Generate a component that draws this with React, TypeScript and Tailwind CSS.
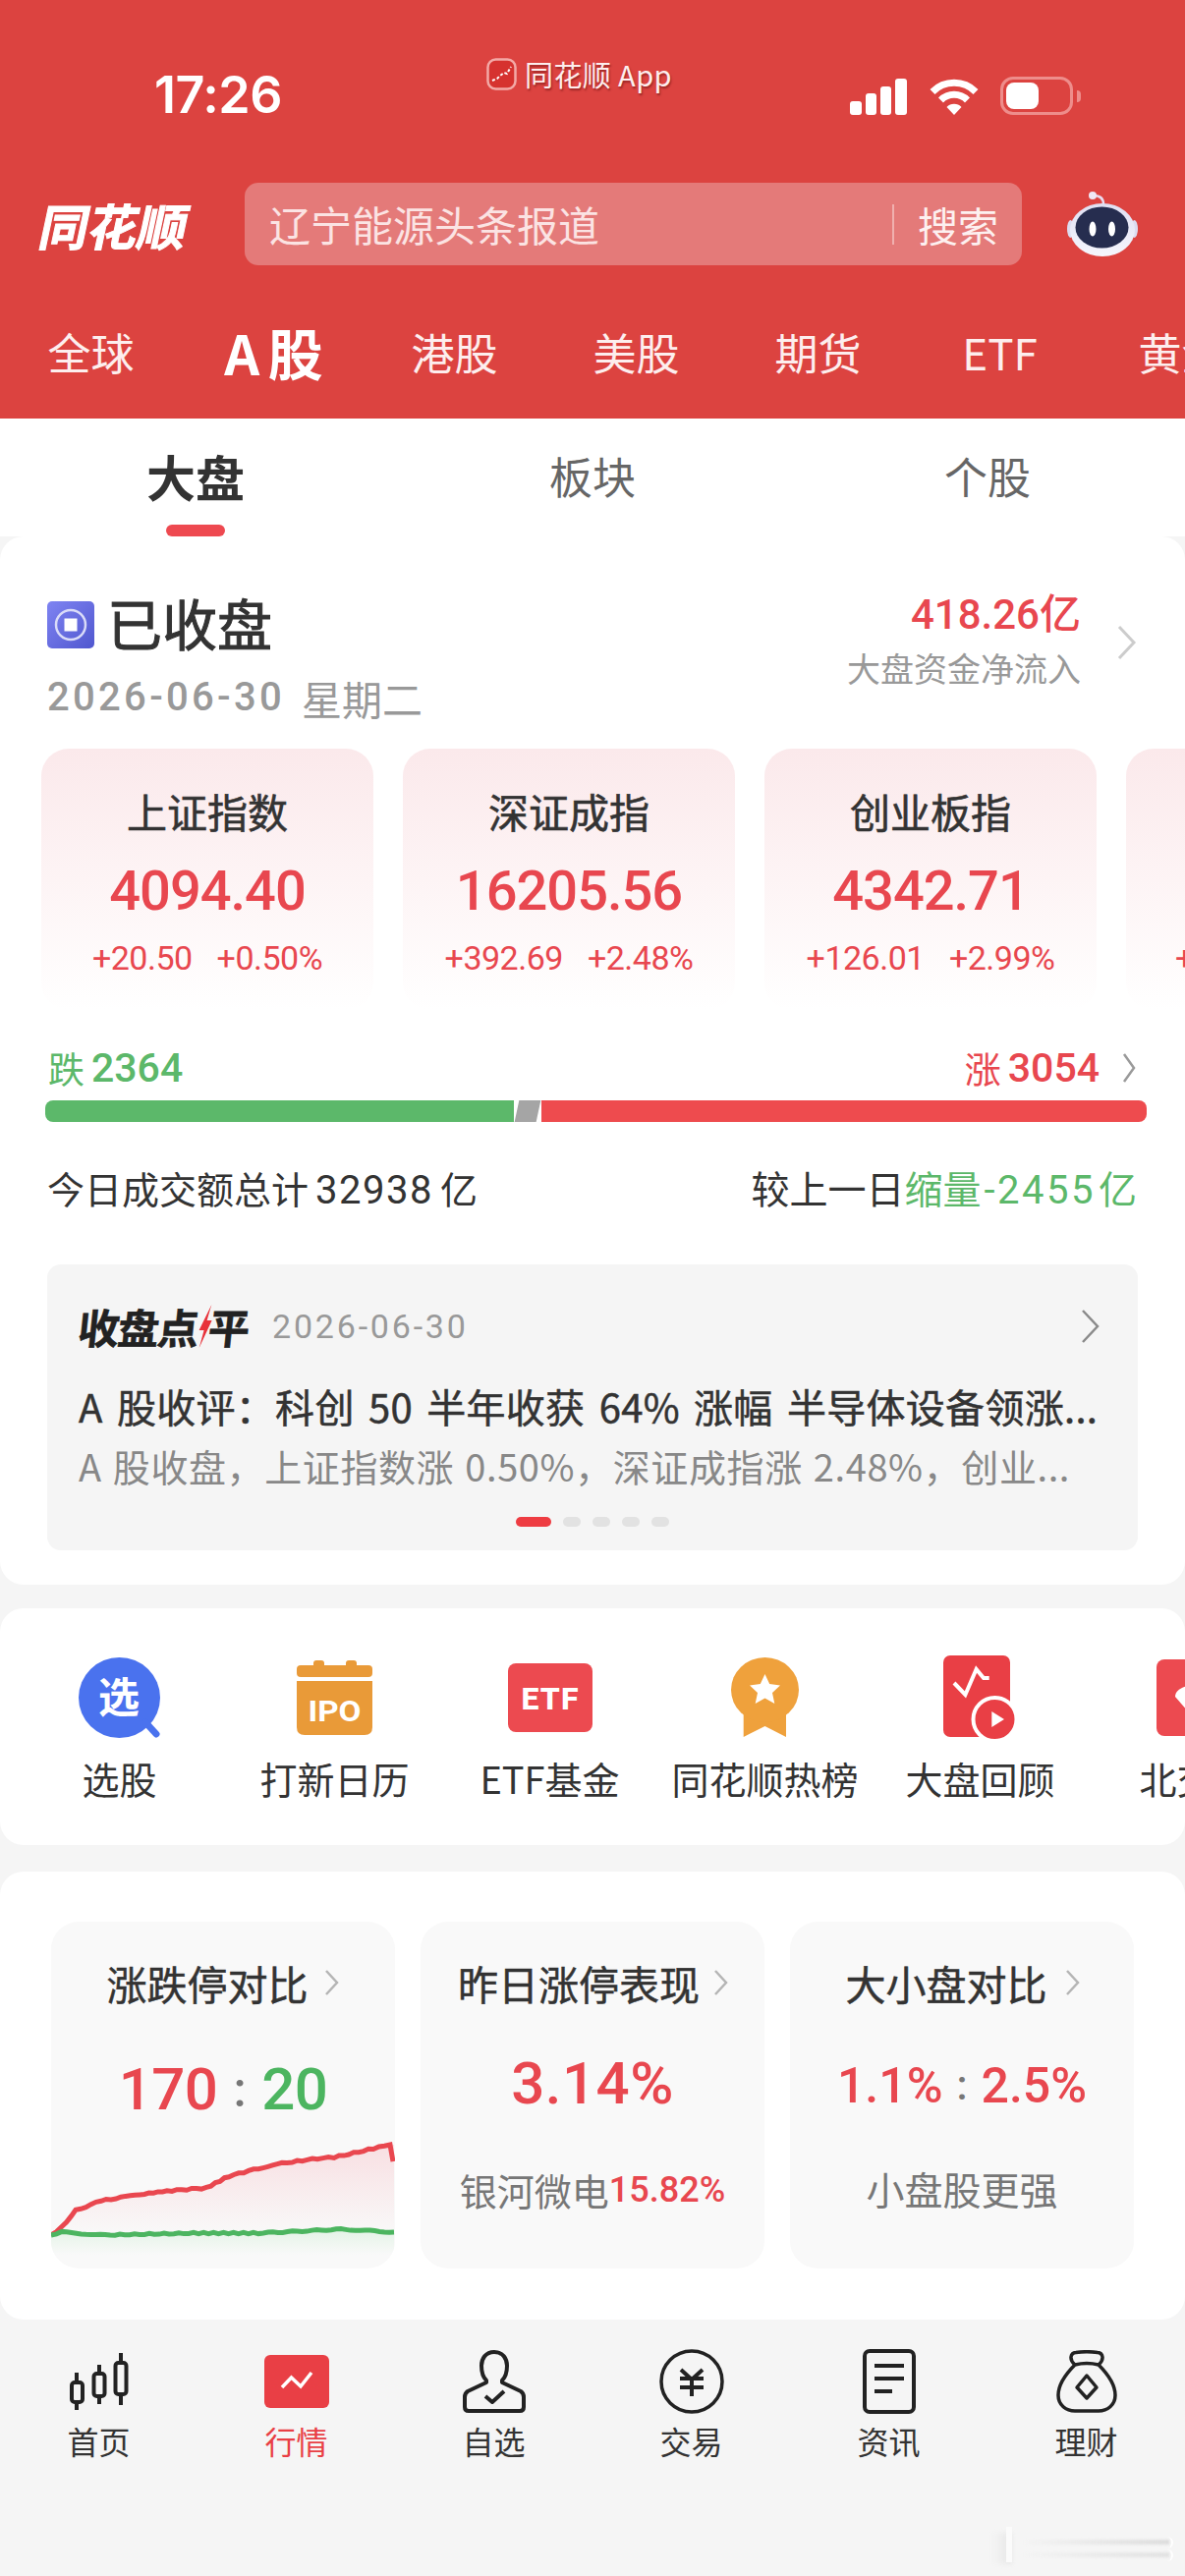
import React from "react";

const cjk = `"Noto Sans CJK SC", sans-serif`;

function Chevron({ w = 20, h = 34, color = "#c8c8c8", sw = 3 }: { w?: number; h?: number; color?: string; sw?: number }) {
  return (
    <svg width={w} height={h} viewBox={`0 0 ${w} ${h}`} fill="none" className="shrink-0">
      <polyline points={`2,2 ${w - 3},${h / 2} 2,${h - 2}`} stroke={color} strokeWidth={sw} />
    </svg>
  );
}

function Robot() {
  return (
    <svg width="72" height="66" viewBox="0 0 72 66">
      <defs>
        <linearGradient id="rb" x1="0" y1="0" x2="0" y2="1">
          <stop offset="0" stopColor="#dfdff2" />
          <stop offset="1" stopColor="#f6f6fd" />
        </linearGradient>
      </defs>
      <path d="M37 13 C37 7 33 4 27 4" stroke="#eadcf0" strokeWidth="2.500" fill="none" />
      <circle cx="26" cy="4" r="4" fill="#f0e8f6" />
      <ellipse cx="3.500" cy="38" rx="3.500" ry="9" fill="#dcdcf0" />
      <ellipse cx="68.500" cy="38" rx="3.500" ry="9" fill="#dcdcf0" />
      <ellipse cx="36" cy="39" rx="33" ry="27" fill="url(#rb)" />
      <ellipse cx="35.500" cy="36.500" rx="27" ry="21" fill="#262d4f" />
      <ellipse cx="26" cy="38" rx="3.500" ry="7.500" fill="#fff" />
      <ellipse cx="45.500" cy="38" rx="3.500" ry="7.500" fill="#fff" />
    </svg>
  );
}

function StatusIcons() {
  return (
    <div className="flex items-end">
      <svg width="58" height="37" viewBox="0 0 58 37">
        <rect x="0" y="23" width="12" height="14" rx="3" fill="#fff" />
        <rect x="16" y="15" width="11" height="22" rx="3" fill="#fff" />
        <rect x="31" y="8" width="11" height="29" rx="3" fill="#fff" />
        <rect x="46" y="0" width="12" height="37" rx="3" fill="#fff" />
      </svg>
      <svg width="52" height="38" viewBox="0 0 52 38" className="ml-[22px]" fill="none">
        <path d="M4 14.500 A31 31 0 0 1 48 14.500" stroke="#fff" strokeWidth="7" />
        <path d="M12.500 23 A19 19 0 0 1 39.500 23" stroke="#fff" strokeWidth="7" />
        <path d="M26 38 L18.500 30 A10.500 10.500 0 0 1 33.500 30 Z" fill="#fff" />
      </svg>
      <div className="ml-[21px] flex items-center">
        <div className="w-[74px] h-[39px] rounded-[13px] border-[3px] border-[#ee8d8b] p-[3px]">
          <div className="w-[33px] h-[27px] rounded-[8px] bg-white" />
        </div>
        <div className="ml-[4px] w-[4px] h-[12px] rounded-r-[4px] bg-[#ee8d8b]" />
      </div>
    </div>
  );
}

function AppMini() {
  return (
    <svg width="31" height="33" viewBox="0 0 31 33" className="shrink-0">
      <rect x="1.500" y="1.500" width="28" height="30" rx="8" fill="#d6322f" stroke="#f3a9a6" strokeWidth="2.500" />
      <polyline points="6,23 11,21 14,18 18,15 21,16 25,9" stroke="#fff" strokeWidth="2" fill="none" strokeDasharray="3 2" />
    </svg>
  );
}

function Header() {
  const tabs = ["全球", "A 股", "港股", "美股", "期货", "ETF", "黄金"];
  return (
    <div className="h-[426px] bg-[#dc4340] flex flex-col overflow-hidden text-white">
      <div className="h-[186px] shrink-0 flex items-start">
        <div className="w-[495px] pl-[157px] pt-[72px] shrink-0">
          <div className="text-[52px] leading-[50px] font-semibold tracking-[-0.5px]" style={{ fontFamily: `Inter, sans-serif` }}>17:26</div>
        </div>
        <div className="pt-[58px] flex items-center w-[370px] shrink-0 h-[92px]">
          <AppMini />
          <span className="ml-[8px] text-[29px] leading-[34px] tracking-[0.4px] text-[#fdeeee] [text-shadow:1px_2px_2px_rgba(90,10,10,0.5)]">同花顺 App</span>
        </div>
        <div className="pt-[78px]"><StatusIcons /></div>
      </div>
      <div className="h-[84px] shrink-0 flex items-center">
        <div className="w-[249px] shrink-0 pl-[42px]">
          <div className="text-[50px] leading-[50px] font-bold tracking-[0px] -skew-x-12 w-[150px] [-webkit-text-stroke:1px_#fff]">同花顺</div>
        </div>
        <div className="w-[791px] h-[84px] shrink-0 rounded-[14px] bg-[#e47a79] flex items-center pl-[25px]">
          <span className="text-[42px] leading-[50px] text-[#fbe3e3] w-[634px] shrink-0">辽宁能源头条报道</span>
          <div className="w-[2px] h-[41px] bg-[#f0b0af] shrink-0" />
          <span className="ml-[24px] text-[41px] leading-[50px] text-[#fdf0f0] shrink-0">搜索</span>
        </div>
        <div className="ml-[46px] shrink-0"><Robot /></div>
      </div>
      <div className="flex items-center h-[156px] w-[1400px] pt-[20px]">
        {tabs.map((t, i) => (
          <div key={t} className="w-[185px] shrink-0 flex justify-center">
            {i === 1 ? (
              <span className="text-[56px] leading-[60px] font-bold tracking-[-2px]">A 股</span>
            ) : (
              <span className="text-[44px] leading-[60px] text-[#fdeeee]">{t}</span>
            )}
          </div>
        ))}
      </div>
    </div>
  );
}

function SubTabs() {
  return (
    <div className="h-[120px] bg-white grid grid-cols-3">
      <div className="flex flex-col items-center pt-[27px] pr-[4px]">
        <span className="text-[50px] leading-[62px] font-bold text-[#333]">大盘</span>
        <div className="mt-[19px] w-[60px] h-[12px] rounded-[6px] bg-[#ee4950]" />
      </div>
      <div className="flex justify-center pt-[27px]"><span className="text-[44px] leading-[62px] text-[#666]">板块</span></div>
      <div className="flex justify-center pt-[27px]"><span className="text-[44px] leading-[62px] text-[#666]">个股</span></div>
    </div>
  );
}

function IndexCard({ title, value, a, b }: { title: string; value: string; a: string; b: string }) {
  return (
    <div className="w-[338px] h-[266px] shrink-0 rounded-[28px] bg-gradient-to-b from-[#fbe9eb] to-white flex flex-col items-center">
      <div className="mt-[39px] h-[48px] text-[41px] leading-[48px] text-[#333] [-webkit-text-stroke:0.6px_#333]">{title}</div>
      <div className="mt-[29px] h-[58px] text-[56px] leading-[58px] font-medium text-[#e8474f] tracking-[-1px]" style={{ fontFamily: "Roboto, sans-serif" }}>{value}</div>
      <div className="mt-[20px] h-[38px] flex gap-[25px] text-[34px] leading-[38px] text-[#e8474f] tracking-[-0.5px]" style={{ fontFamily: "Roboto, sans-serif" }}>
        <span>{a}</span><span>{b}</span>
      </div>
    </div>
  );
}

function MarketCard() {
  return (
    <div className="h-[1067px] bg-white rounded-[24px] overflow-hidden flex flex-col">
      <div className="h-[216px] shrink-0 flex justify-between">
        <div className="pl-[48px] pt-[64px]">
          <div className="flex items-center h-[52px]">
            <svg width="48" height="48" viewBox="0 0 48 48">
              <defs>
                <linearGradient id="st" x1="0" y1="0" x2="1" y2="1">
                  <stop offset="0" stopColor="#7f84f2" />
                  <stop offset="1" stopColor="#5057cf" />
                </linearGradient>
              </defs>
              <rect width="48" height="48" rx="5" fill="url(#st)" />
              <circle cx="24" cy="24" r="15" fill="none" stroke="#d9dbf8" strokeWidth="2.500" />
              <rect x="17.500" y="17.500" width="13" height="13" fill="#fff" />
            </svg>
            <span className="ml-[13px] -mt-[6px] text-[56px] leading-[60px] text-[#333] [-webkit-text-stroke:1px_#333]">已收盘</span>
          </div>
          <div className="mt-[26px] flex items-center h-[44px] text-[#999]">
            <span className="text-[40px] leading-[44px] font-medium tracking-[3.3px]" style={{ fontFamily: "Roboto, sans-serif" }}>2026-06-30</span>
            <span className="ml-[17px] text-[41px] leading-[44px]">星期二</span>
          </div>
        </div>
        <div className="flex items-center pr-[49px]">
          <div className="flex flex-col items-end mt-[-3px] mr-[37px]">
            <span className="text-[42px] leading-[46px] font-medium text-[#e8474f]" style={{ fontFamily: `Roboto, ${cjk}` }}>418.26亿</span>
            <span className="mt-[9px] text-[34px] leading-[44px] text-[#999]">大盘资金净流入</span>
          </div>
          <Chevron w={20} h={36} color="#ccc" sw={3} />
        </div>
      </div>
      <div className="flex gap-[30px] pl-[42px] h-[266px] shrink-0 overflow-hidden">
        <IndexCard title="上证指数" value="4094.40" a="+20.50" b="+0.50%" />
        <IndexCard title="深证成指" value="16205.56" a="+392.69" b="+2.48%" />
        <IndexCard title="创业板指" value="4342.71" a="+126.01" b="+2.99%" />
        <div className="w-[338px] h-[266px] shrink-0 rounded-[28px] bg-gradient-to-b from-[#fbe9eb] to-white pt-[194px] pl-[50px] text-[34px] leading-[38px] text-[#e8474f]" style={{ fontFamily: "Roboto, sans-serif" }}>+28.12</div>
      </div>
      <div className="mt-[39px] h-[40px] shrink-0 flex justify-between items-center pl-[49px] pr-[49px]">
        <div className="flex items-center text-[#5cb86a]">
          <span className="text-[37px] leading-[40px]">跌</span>
          <span className="ml-[7px] text-[41px] leading-[40px] font-medium" style={{ fontFamily: "Roboto, sans-serif" }}>2364</span>
        </div>
        <div className="flex items-center text-[#e8474f]">
          <span className="text-[37px] leading-[40px]">涨</span>
          <span className="ml-[7px] text-[41px] leading-[40px] font-medium" style={{ fontFamily: "Roboto, sans-serif" }}>3054</span>
          <div className="ml-[23px]"><Chevron w={15} h={32} color="#9a9a9a" sw={2.5} /></div>
        </div>
      </div>
      <div className="mt-[13px] ml-[46px] w-[1121px] h-[22px] shrink-0 flex">
        <div className="w-[477px] bg-[#5cb86a] rounded-l-[8px]" />
        <div className="ml-[3px] w-[22px] bg-[#a5a5a5] -skew-x-12" />
        <div className="ml-[3px] flex-1 bg-[#ee4b4e] rounded-r-[8px]" />
      </div>
      <div className="mt-[48px] h-[40px] shrink-0 flex justify-between items-center pl-[48px] pr-[49px] text-[38px] leading-[40px] text-[#333]">
        <span>今日成交额总计<span className="ml-[7px] mr-[7px] text-[40px] tracking-[1.5px]" style={{ fontFamily: "Roboto, sans-serif" }}>32938</span>亿</span>
        <span className="text-[39px]">较上一日<span className="text-[#5cb86a]">缩量<span className="mx-[3px] text-[40px] tracking-[2.5px]" style={{ fontFamily: "Roboto, sans-serif" }}>-2455</span>亿</span></span>
      </div>
      <div className="mt-[57px] mx-[48px] h-[291px] shrink-0 rounded-[14px] bg-[#f5f5f5] flex flex-col px-[32px]">
        <div className="mt-[39px] h-[48px] flex items-center">
          <div className="w-[197px] shrink-0">
            <div className="flex items-center -skew-x-6 text-[42px] leading-[48px] font-bold text-[#222] tracking-[-1.5px] [-webkit-text-stroke:0.6px_#222]">
              <span>收盘点</span>
              <svg width="14" height="44" viewBox="0 0 14 44" className="shrink-0 -mr-[3px]">
                <polygon points="11,0 1,26 6,26 3,44 13,16 8,16" fill="#e8323a" />
              </svg>
              <span>平</span>
            </div>
          </div>
          <span className="text-[34px] leading-[48px] text-[#999] tracking-[2.8px]" style={{ fontFamily: "Roboto, sans-serif" }}>2026-06-30</span>
          <div className="ml-auto mr-[6px]"><Chevron w={20} h={36} color="#8a8a8a" sw={2.5} /></div>
        </div>
        <div className="mt-[33px] h-[48px] text-[40px] leading-[48px] text-[#333] whitespace-nowrap [-webkit-text-stroke:0.5px_#333] tracking-[0.3px] [word-spacing:5px]">{"A 股收评\uFF1A科创 50 半年收获 64% 涨幅 半导体设备领涨..."}</div>
        <div className="mt-[13px] h-[48px] text-[38px] leading-[48px] text-[#888] whitespace-nowrap tracking-[0.6px] [word-spacing:2px]">{"A 股收盘\uFF0C上证指数涨 0.50%\uFF0C深证成指涨 2.48%\uFF0C创业..."}</div>
        <div className="mt-[28px] flex justify-center gap-[12px] items-center h-[10px]">
          <div className="w-[36px] h-[10px] rounded-[5px] bg-[#ee3c42]" />
          <div className="w-[18px] h-[10px] rounded-[5px] bg-[#e2e2e2]" />
          <div className="w-[18px] h-[10px] rounded-[5px] bg-[#e2e2e2]" />
          <div className="w-[18px] h-[10px] rounded-[5px] bg-[#e2e2e2]" />
          <div className="w-[18px] h-[10px] rounded-[5px] bg-[#e2e2e2]" />
        </div>
      </div>
    </div>
  );
}

const starPts = "34.5,17 39.2,27 50,28.500 42,36 44.300,47 34.5,41.500 24.700,47 27,36 19,28.500 29.800,27";

const shortcuts: { label: string; icon: React.ReactNode }[] = [
  {
    label: "选股",
    icon: (
      <svg width="84" height="82" viewBox="0 0 84 82">
        <ellipse cx="41.500" cy="41" rx="41.500" ry="41" fill="#4a72ee" />
        <line x1="68" y1="66" x2="79" y2="78" stroke="#4a72ee" strokeWidth="7" strokeLinecap="round" />
        <text x="41" y="56" textAnchor="middle" fontSize="42" fontWeight="700" fill="#fff" fontFamily={cjk}>选</text>
      </svg>
    ),
  },
  {
    label: "打新日历",
    icon: (
      <svg width="77" height="76" viewBox="0 0 77 76">
        <rect x="17" y="0" width="11" height="10" rx="3" fill="#e99a38" />
        <rect x="50" y="0" width="11" height="10" rx="3" fill="#e99a38" />
        <rect x="0" y="5" width="77" height="12" rx="4" fill="#e99a38" />
        <path d="M0 21 H77 V68 Q77 76 69 76 H8 Q0 76 0 68 Z" fill="#e99a38" />
        <text x="38.500" y="62" textAnchor="middle" fontSize="30" fontWeight="700" fill="#fff" fontFamily="Roboto, sans-serif" textLength="54" lengthAdjust="spacingAndGlyphs">IPO</text>
      </svg>
    ),
  },
  {
    label: "ETF基金",
    icon: (
      <svg width="86" height="70" viewBox="0 0 86 70">
        <rect width="86" height="70" rx="8" fill="#ec4a50" />
        <text x="43" y="47" textAnchor="middle" fontSize="32" fontWeight="800" fill="#fff" fontFamily="Roboto, sans-serif" letterSpacing="1">ETF</text>
      </svg>
    ),
  },
  {
    label: "同花顺热榜",
    icon: (
      <svg width="69" height="82" viewBox="0 0 69 82">
        <polygon points="12.700,50 56,50 56,81 34.500,70 12.700,81" fill="#efa13c" />
        <ellipse cx="34.500" cy="33" rx="34.500" ry="33" fill="#efa13c" />
        <polygon points={starPts} fill="#fff" />
      </svg>
    ),
  },
  {
    label: "大盘回顾",
    icon: (
      <svg width="75" height="87" viewBox="0 0 75 87">
        <rect width="68" height="83" rx="7" fill="#e93f45" />
        <polyline points="11,28 22.400,40 33.600,14 41,23 46.700,23" fill="none" stroke="#fff" strokeWidth="4" />
        <circle cx="52.500" cy="65" r="22" fill="#e93f45" stroke="#fff" strokeWidth="4" />
        <polygon points="49.300,57 62,65 49.300,73" fill="#fff" />
      </svg>
    ),
  },
  {
    label: "北交所",
    icon: (
      <svg width="80" height="78" viewBox="0 0 80 78">
        <rect width="80" height="78" rx="8" fill="#ec4a50" />
        <path d="M19 38 C19 30 30 26 40 26 C50 26 60 30 60 38 L40 62 Z" fill="#fff" />
      </svg>
    ),
  },
];

function Shortcuts() {
  return (
    <div className="mt-[24px] h-[241px] bg-white rounded-[24px] overflow-hidden flex pl-[12px] pt-[46px]">
      {shortcuts.map((s) => (
        <div key={s.label} className="w-[219px] shrink-0 flex flex-col items-center">
          <div className="h-[90px] flex items-center">{s.icon}</div>
          <div className="mt-[17px] text-[38px] leading-[40px] text-[#333] whitespace-nowrap">{s.label}</div>
        </div>
      ))}
    </div>
  );
}

function jitter(points: [number, number][], amp: number) {
  const out: string[] = [];
  for (let i = 0; i < points.length - 1; i++) {
    const [x0, y0] = points[i];
    const [x1, y1] = points[i + 1];
    const n = Math.max(1, Math.round((x1 - x0) / 5));
    for (let k = 0; k < n; k++) {
      const t = k / n;
      const noise = Math.sin((x0 + t * (x1 - x0)) * 12.9898) * amp;
      out.push(`${(x0 + t * (x1 - x0)).toFixed(1)},${(y0 + t * (y1 - y0) + noise).toFixed(1)}`);
    }
  }
  const last = points[points.length - 1];
  out.push(`${last[0]},${last[1]}`);
  return out.join(" ");
}

const redPts: [number, number][] = [[0, 105], [11, 97], [25, 80], [51, 70], [71, 67], [95, 63], [118, 60], [158, 57], [181, 45], [211, 37], [235, 32], [271, 27], [288, 26], [328, 17], [345, 13]];
const greenPts: [number, number][] = [[0, 105], [11, 102], [55, 105], [145, 103], [211, 103], [295, 99], [349, 102]];

function MiniChart() {
  const red = jitter(redPts, 0.8);
  const green = jitter(greenPts, 0.6);
  return (
    <svg width="350" height="139" viewBox="0 0 350 139" className="block">
      <defs>
        <linearGradient id="rf" x1="0" y1="0" x2="0" y2="1">
          <stop offset="0" stopColor="#f8dfe2" />
          <stop offset="1" stopColor="#f9f9f9" />
        </linearGradient>
        <linearGradient id="gf" x1="0" y1="0" x2="0" y2="1">
          <stop offset="0" stopColor="#e3f3e6" />
          <stop offset="1" stopColor="#f9f9f9" />
        </linearGradient>
      </defs>
      <polygon points={`${red} 349,13 349,105 0,105`} fill="url(#rf)" />
      <polygon points={`${green} 349,125 0,125`} fill="url(#gf)" />
      <polyline points={`${red} 348,30`} fill="none" stroke="#e9474f" strokeWidth="5" />
      <polyline points={green} fill="none" stroke="#4cb560" strokeWidth="5" />
    </svg>
  );
}

function Compare() {
  const box = "w-[350px] h-[353px] rounded-[28px] bg-[#f9f9f9] overflow-hidden flex flex-col items-center shrink-0";
  const title = "text-[41px] leading-[48px] text-[#333] [-webkit-text-stroke:0.5px_#333] whitespace-nowrap";
  const digits = { fontFamily: "Roboto, sans-serif" };
  return (
    <div className="mt-[27px] h-[456px] bg-white rounded-[24px] flex gap-[26px] pl-[52px] pt-[51px]">
      <div className={box}>
        <div className="mt-[38px] h-[48px] flex items-center gap-[16px]">
          <span className={title}>涨跌停对比</span>
          <Chevron w={16} h={28} color="#b5b5b5" sw={2.5} />
        </div>
        <div className="mt-[55px] h-[60px] flex items-center text-[60px] leading-[60px] font-medium tracking-[-0.5px]" style={digits}>
          <span className="text-[#e8474f]">170</span>
          <span className="mx-[16px] text-[#777] text-[50px]">:</span>
          <span className="text-[#4cb560]">20</span>
        </div>
        <div className="mt-[13px]"><MiniChart /></div>
      </div>
      <div className={box}>
        <div className="mt-[38px] h-[48px] flex items-center gap-[14px] ml-[2px]">
          <span className={title}>昨日涨停表现</span>
          <Chevron w={16} h={28} color="#b5b5b5" sw={2.5} />
        </div>
        <div className="mt-[49px] h-[60px] text-[60px] leading-[60px] font-medium text-[#e8474f] tracking-[0.5px]" style={digits}>3.14%</div>
        <div className="mt-[54px] h-[48px] flex items-center">
          <span className="text-[38px] leading-[48px] text-[#777]">银河微电</span>
          <span className="text-[36px] leading-[48px] font-medium text-[#e8474f]" style={digits}>15.82%</span>
        </div>
      </div>
      <div className={box}>
        <div className="mt-[38px] h-[48px] flex items-center gap-[18px] ml-[2px]">
          <span className={title}>大小盘对比</span>
          <Chevron w={16} h={28} color="#b5b5b5" sw={2.5} />
        </div>
        <div className="mt-[56px] h-[50px] flex items-center text-[50px] leading-[50px] font-medium text-[#e8474f]" style={digits}>
          <span>1.1%</span>
          <span className="mx-[14px] text-[#777] text-[42px]">:</span>
          <span>2.5%</span>
        </div>
        <div className="mt-[55px] h-[48px] text-[39px] leading-[48px] text-[#777]">小盘股更强</div>
      </div>
    </div>
  );
}

const ink = "#222";
const navItems: { label: string; icon: React.ReactNode; active?: boolean }[] = [
  {
    label: "首页",
    icon: (
      <svg width="60" height="58" viewBox="0 0 60 58" fill="none" stroke={ink} strokeWidth="4">
        <line x1="7" y1="20" x2="7" y2="58" />
        <rect x="2" y="30" width="11" height="20" rx="3" fill="#f5f5f5" />
        <line x1="30" y1="12" x2="30" y2="52" />
        <rect x="24.500" y="21" width="11" height="23" rx="3" fill="#f5f5f5" />
        <line x1="52" y1="0" x2="52" y2="53" />
        <rect x="46.500" y="10" width="11" height="32" rx="3" fill="#f5f5f5" />
      </svg>
    ),
  },
  {
    label: "行情",
    active: true,
    icon: (
      <svg width="66" height="54" viewBox="0 0 66 54">
        <rect width="66" height="54" rx="6" fill="#e93f45" />
        <polyline points="18,33 27.500,23 37,32 48,18" fill="none" stroke="#fff" strokeWidth="3.500" />
      </svg>
    ),
  },
  {
    label: "自选",
    icon: (
      <svg width="66" height="64" viewBox="0 0 66 64" fill="none" stroke={ink} strokeWidth="4" strokeLinejoin="round">
        <path d="M33 2 C24 2 20 9 20 16 C20 24 22 28 25 31 L25 33 L6 42 Q3 44 3 48 L3 58 Q3 62 7 62 L59 62 Q63 62 63 58 L63 48 Q63 44 60 42 L41 33 L41 31 C44 28 46 24 46 16 C46 9 42 2 33 2Z" />
        <polyline points="24,47 31,53 43,42" />
      </svg>
    ),
  },
  {
    label: "交易",
    icon: (
      <svg width="66" height="66" viewBox="0 0 66 66" fill="none" stroke={ink} strokeWidth="3.500">
        <circle cx="33" cy="33" r="31" />
        <polyline points="22,21 33,31 44,21" strokeWidth="4" />
        <line x1="21" y1="30" x2="45" y2="30" strokeWidth="4" />
        <line x1="21" y1="39" x2="45" y2="39" strokeWidth="4" />
        <line x1="33" y1="31" x2="33" y2="48" strokeWidth="4" />
      </svg>
    ),
  },
  {
    label: "资讯",
    icon: (
      <svg width="54" height="66" viewBox="0 0 54 66" fill="none" stroke={ink} strokeWidth="4">
        <rect x="2" y="2" width="50" height="62" rx="5" />
        <line x1="12" y1="17" x2="42" y2="17" />
        <line x1="12" y1="30" x2="42" y2="30" />
        <line x1="12" y1="43" x2="30" y2="43" />
      </svg>
    ),
  },
  {
    label: "理财",
    icon: (
      <svg width="62" height="64" viewBox="0 0 62 64" fill="none" stroke={ink} strokeWidth="3.500" strokeLinejoin="round">
        <path d="M19 15 C13 10 14 3 20 2.500 C27 1.500 35 1.500 42 2.500 C48 3 49 10 43 15" />
        <path d="M19 15 C27 13 35 13 43 15 C52 24 60 36 60 46 C60 56 52 62 43 62 L19 62 C10 62 2 56 2 46 C2 36 10 24 19 15 Z" />
        <polygon points="31,26 41,38 31,49 21,38" />
      </svg>
    ),
  },
];

function BottomNav() {
  return (
    <div className="flex-1 grid grid-cols-6 content-start pt-[30px]">
      {navItems.map((n) => (
        <div key={n.label} className="flex flex-col items-center">
          <div className="h-[66px] flex items-center">{n.icon}</div>
          <div className={`mt-[7px] text-[32px] leading-[40px] ${n.active ? "text-[#e93f45]" : "text-[#333]"}`}>{n.label}</div>
        </div>
      ))}
    </div>
  );
}

function Watermark() {
  return (
    <div className="absolute left-[1000px] top-[2570px] w-[200px] h-[42px] pointer-events-none">
      <div className="absolute left-[10px] top-[8px] w-[20px] h-[32px] bg-gradient-to-r from-transparent to-[#e6e6e6] blur-[2px]" />
      <div className="absolute left-[24px] top-[2px] w-[6px] h-[36px] bg-[#fbfbfb]" />
      <div className="absolute left-[40px] top-[15px] w-[150px] h-[5px] bg-gradient-to-r from-transparent to-[#dddddd] blur-[1px]" />
      <div className="absolute left-[40px] top-[28px] w-[150px] h-[5px] bg-gradient-to-r from-transparent to-[#e2e2e2] blur-[1px]" />
      <div className="absolute left-[186px] top-[12px] w-[8px] h-[12px] rounded-r-full border-r-[2px] border-white" />
      <div className="absolute left-[186px] top-[25px] w-[8px] h-[12px] rounded-r-full border-r-[2px] border-white" />
    </div>
  );
}

export default function App() {
  return (
    <div className="relative w-[1206px] h-[2622px] bg-[#f5f5f5] overflow-hidden flex flex-col" style={{ fontFamily: `"Noto Sans CJK SC", sans-serif` }}>
      <Header />
      <SubTabs />
      <MarketCard />
      <Shortcuts />
      <Compare />
      <BottomNav />
      <Watermark />
    </div>
  );
}
